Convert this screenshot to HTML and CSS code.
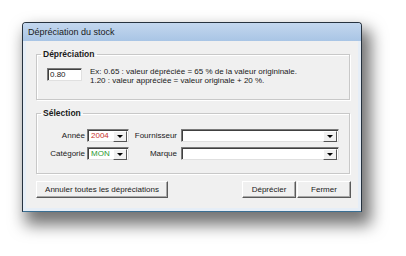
FILE: index.html
```html
<!DOCTYPE html>
<html lang="fr">
<head>
    <meta charset="UTF-8">
    <title>Dépréciation du stock</title>
    <link rel="stylesheet" href="styles.css">
</head>
<body>
    <div class="stage">
        <div class="window">
            <div class="titlebar">Dépréciation du stock</div>
            <div class="client">
                <fieldset class="group">
                    <legend>Dépréciation</legend>
                    <div class="depr-row">
                        <div class="textbox">0.80</div>
                        <div class="hint">
                            Ex: 0.65 : valeur dépréciée = 65 % de la valeur origininale.<br>
                            1.20 : valeur appréciée = valeur originale + 20 %.
                        </div>
                    </div>
                </fieldset>
                <fieldset class="group sel">
                    <legend>Sélection</legend>
                    <div class="sel-grid">
                        <span class="lbl">Année</span>
                        <div class="combo"><span class="val red">2004</span><span class="drop"></span></div>
                        <span class="lbl lbl2">Fournisseur</span>
                        <div class="combo"><span class="val"></span><span class="drop"></span></div>
                        <span class="lbl">Catégorie</span>
                        <div class="combo"><span class="val green">MON</span><span class="drop"></span></div>
                        <span class="lbl lbl2">Marque</span>
                        <div class="combo"><span class="val"></span><span class="drop"></span></div>
                    </div>
                </fieldset>
                <div class="actions">
                    <button class="btn wide">Annuler toutes les dépréciations</button>
                    <span class="spacer"></span>
                    <button class="btn">Déprécier</button>
                    <button class="btn">Fermer</button>
                </div>
            </div>
        </div>
    </div>
</body>
</html>
```

FILE: styles.css
```css
body {
    margin: 0;
    background: #fff;
    font-family: "Liberation Sans", Arial, sans-serif;
    font-size: 8px;
    color: #1a1a1a;
}
.stage {
    padding: 22px 0 0 22px;
    height: 234px;
}
.window {
    width: 338px;
    height: 188px;
    border: 1px solid #26323f;
    border-bottom-color: #3a6f93;
    border-radius: 4px 4px 0 0;
    background: #e6eef7;
    box-shadow: 6px 10px 16px 3px rgba(0, 0, 0, 0.55);
    display: flex;
    flex-direction: column;
}
.titlebar {
    height: 18px;
    line-height: 18px;
    padding-left: 5px;
    font-size: 9px;
    color: #1a1a1a;
    background: linear-gradient(#c3d7ee, #a9c5e5);
    border-radius: 3px 3px 0 0;
}
.client {
    margin: 0 3px 3px;
    flex: 1;
    background: #f0f0f0;
    padding: 8px 8px 0 10px;
}
.group {
    margin: 0;
    padding: 9px 0 13px 0;
    border: 1px solid #c8c8c8;
    box-shadow: inset 1px 1px 0 #fff, 1px 1px 0 #fff;
}
.group legend {
    font-weight: bold;
    font-size: 8.5px;
    line-height: 10px;
    padding: 0 2px;
    margin-left: 4px;
    color: #1a1a1a;
}
.depr-row {
    display: flex;
    gap: 8px;
    height: 18px;
    margin-left: 10px;
}
.textbox {
    width: 31px;
    height: 11px;
    line-height: 11px;
    padding-left: 2px;
    background: #fff;
    border: 1px solid #7a7a7a;
    border-right-color: #e0e0e0;
    border-bottom-color: #e0e0e0;
    box-shadow: inset 1px 1px 0 #404040;
}
.hint {
    line-height: 9px;
    margin-top: -1px;
}
.sel {
    margin-top: 8px;
    padding: 11px 0 13px 0;
}
.sel-grid {
    display: grid;
    grid-template-columns: 50px 42px 52px 158px;
    grid-auto-rows: 13px;
    row-gap: 5px;
    align-items: center;
}
.lbl {
    text-align: right;
    padding-right: 2px;
}
.lbl2 {
    padding-right: 4px;
}
.combo {
    height: 13px;
    box-sizing: border-box;
    display: flex;
    background: #fff;
    border: 1px solid #7a7a7a;
    border-right-color: #e0e0e0;
    border-bottom-color: #e0e0e0;
    box-shadow: inset 1px 1px 0 #404040;
    padding: 1px 0 0 1px;
}
.val {
    flex: 1;
    line-height: 10px;
    padding-left: 2px;
}
.red {
    color: #c8322e;
}
.green {
    color: #2b9a34;
}
.drop {
    width: 12px;
    height: 9px;
    margin: 0 1px 0 0;
    background: #f0f0f0;
    border: 1px solid #fff;
    border-right-color: #555;
    border-bottom-color: #555;
    display: flex;
    align-items: center;
    justify-content: center;
}
.drop::after {
    content: "";
    border-left: 3px solid transparent;
    border-right: 3px solid transparent;
    border-top: 3px solid #000;
}
.actions {
    display: flex;
    margin-top: 7px;
    margin-right: -1px;
}
.spacer {
    flex: 1;
}
.btn {
    height: 17px;
    width: 54px;
    padding: 0;
    font-family: inherit;
    font-size: 8px;
    color: #1a1a1a;
    background: #f0f0f0;
    border: 1px solid #fff;
    border-right-color: #5a5a5a;
    border-bottom-color: #5a5a5a;
    box-shadow: inset -1px -1px 0 #a8a8a8;
    margin-left: 1px;
}
.btn.wide {
    width: 132px;
    margin-left: 0;
}
```
